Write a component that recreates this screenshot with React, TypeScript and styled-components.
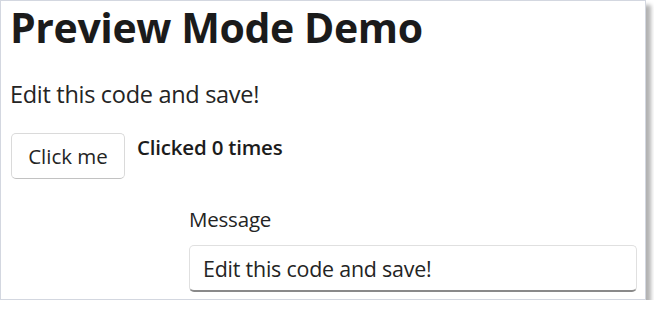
import React, { useState } from 'react';
import styled, { createGlobalStyle } from 'styled-components';

const GlobalStyle = createGlobalStyle`
  html, body {
    margin: 0;
    padding: 0;
    background: #ffffff;
  }
  body {
    font-family: 'Open Sans', 'Noto Sans', sans-serif;
    color: #242424;
  }
`;

const Frame = styled.div`
  box-sizing: border-box;
  width: 646px;
  height: 300px;
  border: 1px solid #d3d7e0;
  box-shadow: 5px 5px 4px rgba(0, 0, 0, 0.3);
  padding: 0 9px;
  background: #ffffff;
  overflow: hidden;
`;

const Title = styled.h1`
  margin: 0;
  font-size: 41px;
  line-height: 52px;
  font-weight: 700;
  letter-spacing: -0.4px;
  color: #1b1b1b;
`;

const Intro = styled.p`
  margin: 26px 0 0;
  font-size: 23.5px;
  line-height: 30px;
  font-weight: 400;
  letter-spacing: -0.3px;
`;

const Row = styled.div`
  display: flex;
  align-items: flex-start;
  gap: 12px;
  margin-top: 24px;
`;

const Button = styled.button`
  box-sizing: border-box;
  width: 114px;
  height: 46px;
  margin-left: 1px;
  padding: 0;
  background: #ffffff;
  border: 1px solid #dadada;
  border-bottom-color: #c2c2c2;
  border-radius: 5px;
  font-family: inherit;
  font-size: 20.5px;
  color: #242424;
  cursor: pointer;
`;

const Count = styled.span`
  margin-top: 1px;
  font-size: 20.5px;
  line-height: 26px;
  font-weight: 600;
  letter-spacing: -0.2px;
  color: #1c1c1c;
`;

const Field = styled.div`
  display: flex;
  flex-direction: column;
  gap: 13px;
  margin: 27px 0 0 179px;
`;

const Label = styled.label`
  font-size: 20.5px;
  line-height: 26px;
  letter-spacing: -0.2px;
`;

const Input = styled.input`
  box-sizing: border-box;
  width: 448px;
  height: 47px;
  padding: 0 13px;
  border: 1px solid #e0e0e0;
  border-bottom: 2px solid #8a8a8a;
  border-radius: 5px;
  font-family: inherit;
  font-size: 21.4px;
  color: #242424;
  letter-spacing: -0.2px;
  outline: none;
`;

export default function App() {
  const [count, setCount] = useState(0);
  const [message, setMessage] = useState('Edit this code and save!');

  return (
    <>
      <GlobalStyle />
      <Frame>
        <Title>Preview Mode Demo</Title>
        <Intro>Edit this code and save!</Intro>
        <Row>
          <Button onClick={() => setCount(count + 1)}>Click me</Button>
          <Count>Clicked {count} times</Count>
        </Row>
        <Field>
          <Label htmlFor="msg">Message</Label>
          <Input id="msg" value={message} onChange={(e) => setMessage(e.target.value)} />
        </Field>
      </Frame>
    </>
  );
}
